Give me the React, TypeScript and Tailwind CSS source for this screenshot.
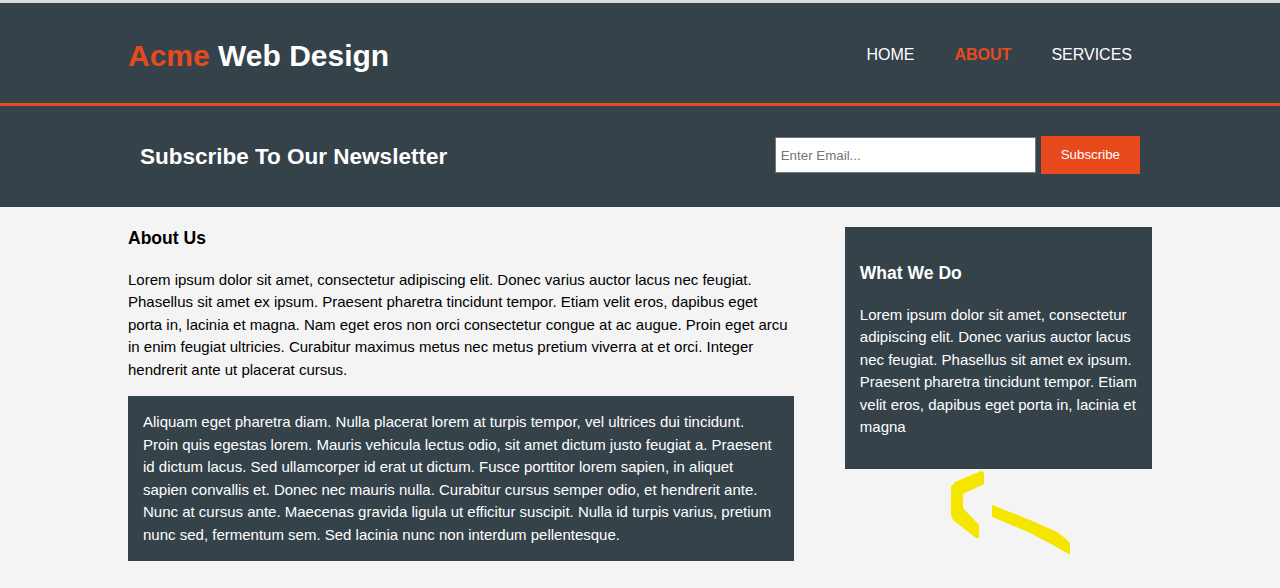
export default function App() {
  const navItems = [
    { label: "Home", current: false },
    { label: "About", current: true },
    { label: "Services", current: false },
  ];

  return (
    <div className="relative min-h-screen bg-[#f4f4f4] text-[15px] leading-[1.5] text-black font-['Liberation_Sans',Arial,sans-serif]">
      <div className="h-[3px] bg-[#dcdcdc]" />

      {/* header */}
      <header className="h-[103px] bg-[#35424a] pt-[30px] text-white border-b-[3px] border-[#e8491d]">
        <div className="w-4/5 mx-auto flex justify-between items-start">
          <h1 className="text-[30px] leading-[45px] font-bold">
            <span className="text-[#e8491d]">Acme</span> Web Design
          </h1>
          <nav className="mt-[10px]">
            <ul className="flex">
              {navItems.map((item) => (
                <li key={item.label} className="px-5">
                  <a
                    href="#"
                    className={`text-base leading-6 uppercase ${
                      item.current ? "text-[#e8491d] font-bold" : "text-white"
                    }`}
                  >
                    {item.label}
                  </a>
                </li>
              ))}
            </ul>
          </nav>
        </div>
      </header>

      {/* newsletter */}
      <section className="bg-[#35424a] p-[15px] text-white">
        <div className="w-4/5 mx-auto flex justify-between items-start">
          <h2 className="text-[22.5px] leading-[33.75px] font-bold my-[18.7px]">
            Subscribe To Our Newsletter
          </h2>
          <form className="mt-[15px] flex items-center gap-[5px]" onSubmit={(e) => e.preventDefault()}>
            <input
              type="email"
              placeholder="Enter Email..."
              className="w-[261px] h-[36px] bg-white border border-[#767676] px-[5px] text-[13.33px] text-black placeholder:text-[#757575] outline-none"
            />
            <button
              type="submit"
              className="h-[38px] px-5 bg-[#e8491d] text-white text-[13.33px]"
            >
              Subscribe
            </button>
          </form>
        </div>
      </section>

      {/* content */}
      <section className="w-4/5 mx-auto flex justify-between items-start pb-[27px]">
        <article className="w-[65%]">
          <h3 className="text-[17.55px] leading-[26.3px] font-bold my-[17.55px]">About Us</h3>
          <p className="mb-[15px]">
            Lorem ipsum dolor sit amet, consectetur adipiscing elit. Donec varius auctor lacus nec
            feugiat. Phasellus sit amet ex ipsum. Praesent pharetra tincidunt tempor. Etiam velit
            eros, dapibus eget porta in, lacinia et magna. Nam eget eros non orci consectetur congue
            at ac augue. Proin eget arcu in enim feugiat ultricies. Curabitur maximus metus nec metus
            pretium viverra at et orci. Integer hendrerit ante ut placerat cursus.
          </p>
          <div className="bg-[#35424a] text-white p-[15px]">
            Aliquam eget pharetra diam. Nulla placerat lorem at turpis tempor, vel ultrices dui
            tincidunt. Proin quis egestas lorem. Mauris vehicula lectus odio, sit amet dictum justo
            feugiat a. Praesent id dictum lacus. Sed ullamcorper id erat ut dictum. Fusce porttitor
            lorem sapien, in aliquet sapien convallis et. Donec nec mauris nulla. Curabitur cursus
            semper odio, et hendrerit ante. Nunc at cursus ante. Maecenas gravida ligula ut efficitur
            suscipit. Nulla id turpis varius, pretium nunc sed, fermentum sem. Sed lacinia nunc non
            interdum pellentesque.
          </div>
        </article>

        <aside className="w-[30%] mt-[20px] bg-[#35424a] text-white p-[15px]">
          <h3 className="text-[17.55px] leading-[26.3px] font-bold my-[17.55px]">What We Do</h3>
          <p className="mb-[15px]">
            Lorem ipsum dolor sit amet, consectetur adipiscing elit. Donec varius auctor lacus nec
            feugiat. Phasellus sit amet ex ipsum. Praesent pharetra tincidunt tempor. Etiam velit
            eros, dapibus eget porta in, lacinia et magna
          </p>
        </aside>
      </section>

      {/* yellow hand-drawn annotation over the page */}
      <svg
        className="absolute top-0 left-0 pointer-events-none"
        width="1280"
        height="588"
        viewBox="0 0 1280 588"
      >
        <polygon
          fill="#f5e600"
          points="981,471 984,472 984,484 963,494 963,508 979,525 979,538 976,538 953,520 951,515 951,487 955,482"
        />
        <polygon
          fill="#f5e600"
          points="992,505 1030,520 1057,532 1065,538 1070,543 1070,555 1053,545 1028,532 992,517"
        />
      </svg>
    </div>
  );
}
